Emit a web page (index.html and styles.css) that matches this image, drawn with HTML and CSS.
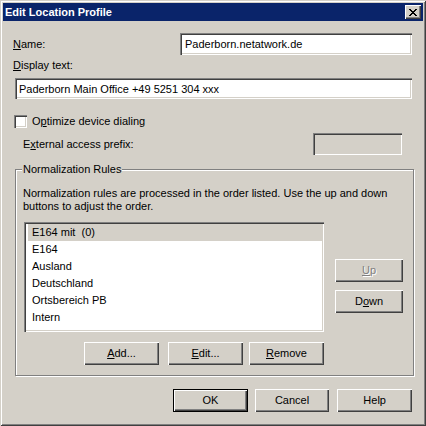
FILE: index.html
```html
<!DOCTYPE html>
<html lang="en">
<head>
  <meta charset="UTF-8" />
  <title>Edit Location Profile</title>
  <link rel="stylesheet" href="styles.css">
</head>
<body>

<div class="window">
  <div class="titlebar">
    <span class="title">Edit Location Profile</span>
    <button class="close" type="button">
      <svg width="8" height="7" viewBox="0 0 8 7" shape-rendering="crispEdges">
        <path fill="#000" d="M0 0h2v1h-2z M6 0h2v1h-2z M1 1h2v1h-2z M5 1h2v1h-2z M2 2h4v1h-4z M3 3h2v1h-2z M2 4h4v1h-4z M1 5h2v1h-2z M5 5h2v1h-2z M0 6h2v1h-2z M6 6h2v1h-2z"/>
      </svg>
    </button>
  </div>

  <div class="dialog">
    <div class="name-row">
      <label class="lbl" for="name"><u>N</u>ame:</label>
      <input class="edit name-edit" id="name" type="text" value="Paderborn.netatwork.de">
    </div>

    <label class="lbl display-lbl" for="display"><u>D</u>isplay text:</label>
    <input class="edit display-edit" id="display" type="text" value="Paderborn Main Office +49 5251 304 xxx">

    <div class="check-row">
      <span class="checkbox"></span>
      <span>O<u>p</u>timize device dialing</span>
    </div>

    <div class="prefix-row">
      <span class="lbl prefix-lbl">E<u>x</u>ternal access prefix:</span>
      <span class="edit prefix-edit"></span>
    </div>

    <fieldset class="group">
      <legend>Normalization Rules</legend>
      <p class="desc">Normalization rules are processed in the order listed. Use the up and down<br>buttons to adjust the order.</p>

      <div class="list-row">
        <ul class="listbox">
          <li class="selected">E164 mit&nbsp; (0)</li>
          <li>E164</li>
          <li>Ausland</li>
          <li>Deutschland</li>
          <li>Ortsbereich PB</li>
          <li>Intern</li>
        </ul>
        <div class="side-buttons">
          <button class="btn" type="button" disabled><u>U</u>p</button>
          <button class="btn" type="button">D<u>o</u>wn</button>
        </div>
      </div>

      <div class="rule-buttons">
        <button class="btn" type="button"><u>A</u>dd...</button>
        <button class="btn btn-edit" type="button"><u>E</u>dit...</button>
        <button class="btn btn-remove" type="button"><u>R</u>emove</button>
      </div>
    </fieldset>

    <div class="footer">
      <button class="btn default" type="button">OK</button>
      <button class="btn btn-cancel" type="button">Cancel</button>
      <button class="btn btn-help" type="button">Help</button>
    </div>
  </div>
</div>

</body>
</html>
```

FILE: styles.css
```css
* {
  box-sizing: border-box;
}
html, body {
  margin: 0;
  padding: 0;
}
body {
  font-family: Tahoma, "Liberation Sans", Arial, sans-serif;
  font-size: 11px;
  line-height: 13px;
  color: #000;
  background: #d4d0c8;
}
u {
  text-decoration: underline;
  text-underline-offset: 1px;
}

/* window frame */
.window {
  width: 426px;
  height: 426px;
  padding: 3px;
  background: #d4d0c8;
  box-shadow: inset 1px 1px #d4d0c8, inset -1px -1px #404040,
              inset 2px 2px #fff, inset -2px -2px #808080;
}
.titlebar {
  height: 18px;
  display: flex;
  align-items: center;
  padding-left: 2px;
  background: #0a246a;
  color: #fff;
  font-weight: bold;
}
.close {
  margin-left: auto;
  margin-right: 2px;
  width: 16px;
  height: 14px;
  padding: 0;
  border: 0;
  background: #d4d0c8;
  display: flex;
  align-items: center;
  justify-content: center;
  box-shadow: inset 1px 1px #fff, inset -1px -1px #404040, inset -2px -2px #808080;
}

/* dialog body */
.dialog {
  padding: 12px 11px 0 10px;
}
.lbl {
  display: block;
}
.edit {
  display: block;
  border: 0;
  outline: none;
  margin: 0;
  font: inherit;
  color: #000;
  background: #fff;
  padding: 0 2px 0 4px;
  box-shadow: inset 1px 1px #808080, inset 2px 2px #404040,
              inset -1px -1px #fff, inset -2px -2px #d4d0c8;
}
.name-row {
  display: flex;
  align-items: center;
  height: 22px;
}
.name-edit {
  margin-left: auto;
  width: 232px;
  height: 22px;
  padding-left: 5px;
}
.display-lbl {
  margin-top: 4px;
}
.display-edit {
  margin: 6px 0 0 2px;
  width: 397px;
  height: 21px;
}
.check-row {
  display: flex;
  align-items: center;
  gap: 5px;
  height: 13px;
  margin: 16px 0 0 1px;
}
.checkbox {
  width: 13px;
  height: 13px;
  background: #fff;
  box-shadow: inset 1px 1px #808080, inset 2px 2px #404040,
              inset -1px -1px #fff, inset -2px -2px #d4d0c8;
}
.prefix-row {
  display: flex;
  align-items: center;
  height: 22px;
  margin-top: 5px;
}
.prefix-lbl {
  margin-left: 10px;
}
.prefix-edit {
  margin: 0 10px 0 auto;
  width: 89px;
  height: 22px;
  background: #d4d0c8;
}

/* group box */
.group {
  width: 398px;
  margin: 8px 0 0 2px;
  padding: 0 10px 10px 6px;
  border: 1px solid #808080;
  box-shadow: inset 1px 1px #fff, 1px 1px #fff;
}
.group legend {
  padding: 0 1px;
  line-height: 13px;
  background: #d4d0c8;
}
.desc {
  margin: 11px 0 0 1px;
}
.list-row {
  display: flex;
  margin: 9px 0 0 2px;
}
.listbox {
  list-style: none;
  margin: 0;
  padding: 2px 2px 2px 4px;
  width: 300px;
  height: 110px;
  background: #fff;
  box-shadow: inset 1px 1px #808080, inset 2px 2px #404040,
              inset -1px -1px #fff, inset -2px -2px #d4d0c8;
}
.listbox li {
  height: 17px;
  line-height: 17px;
  padding-left: 4px;
}
.listbox li.selected {
  background: #d4d0c8;
}
.side-buttons {
  display: flex;
  flex-direction: column;
  gap: 8px;
  margin: 37px 0 0 11px;
}
.side-buttons .btn {
  width: 68px;
}

/* push buttons */
.btn {
  width: 75px;
  height: 23px;
  padding: 0;
  border: 0;
  font: inherit;
  color: #000;
  background: #d4d0c8;
  box-shadow: inset 1px 1px #fff, inset -1px -1px #404040, inset -2px -2px #808080;
}
.btn:disabled {
  color: #808080;
  text-shadow: 1px 1px #fff;
}
.btn.default {
  border: 1px solid #000;
}
.rule-buttons {
  display: flex;
  margin: 10px 0 0 62px;
}
.btn-edit {
  margin-left: 9px;
}
.btn-remove {
  margin-left: 6px;
}
.footer {
  display: flex;
  margin: 13px 0 0 160px;
}
.btn-cancel {
  margin-left: 7px;
}
.btn-help {
  margin-left: 8px;
}
```
